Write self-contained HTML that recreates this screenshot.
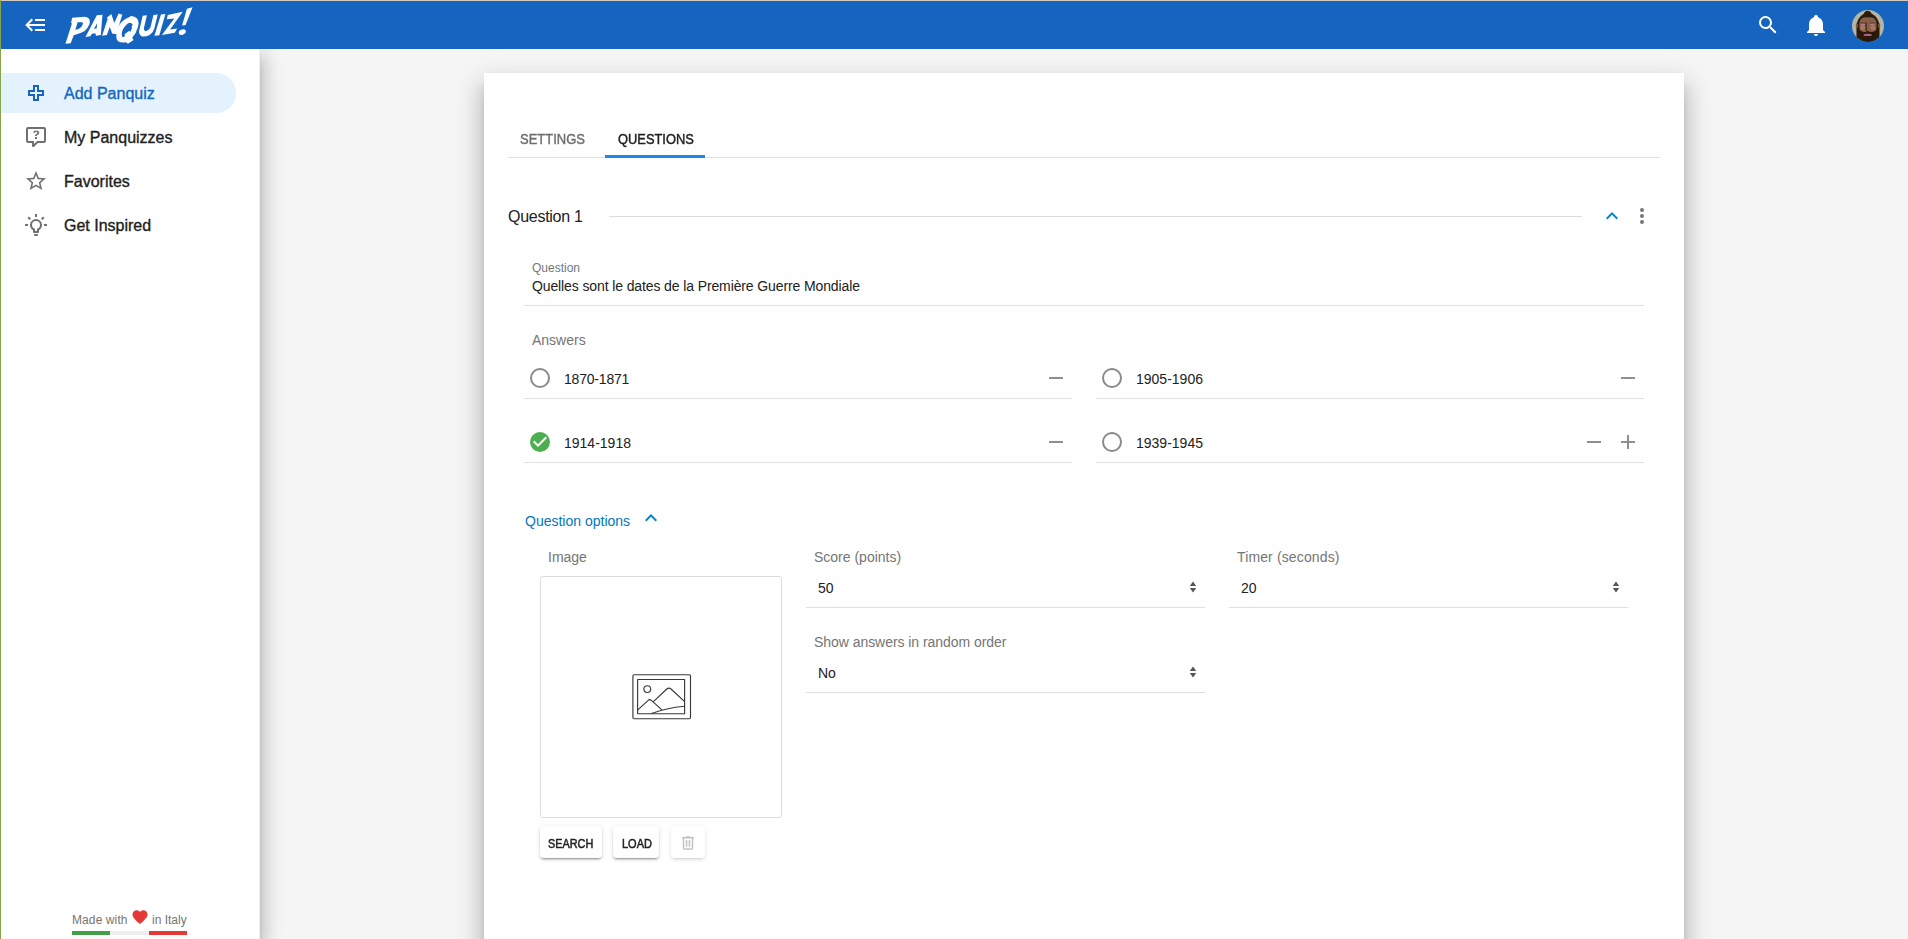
<!DOCTYPE html>
<html lang="en">
<head>
<meta charset="utf-8">
<title>Panquiz!</title>
<style>
*{box-sizing:border-box;margin:0;padding:0}
html,body{width:1908px;height:939px;overflow:hidden;background:#f5f5f5;font-family:"Liberation Sans",sans-serif;color:#212121}
body{position:relative}
.abs{position:absolute}
.t{position:absolute;white-space:nowrap;line-height:1;transform-origin:0 0}
.m{-webkit-text-stroke:0.35px currentColor}
.g{color:#757575}
.ln{position:absolute;height:1px;background:#e0e0e0}
svg{position:absolute;overflow:visible}
#topline{left:0;top:0;width:1908px;height:1px;background:#d1c9be}
#leftline{left:0;top:0;width:1px;height:939px;background:#84a648}
#header{left:1px;top:1px;width:1907px;height:48px;background:#1565c0}
#side{left:1px;top:49px;width:259px;height:890px;background:#fff;border-right:1px solid #efefef;box-shadow:0 7px 8px -4px rgba(0,0,0,.2),0 12px 17px 2px rgba(0,0,0,.15),0 5px 22px 4px rgba(0,0,0,.13)}
#active{left:1px;top:73px;width:235px;height:40px;background:#e3f2fd;border-radius:0 20px 20px 0}
#card{left:484px;top:73px;width:1200px;height:900px;background:#fff;box-shadow:0 9px 9px -4px rgba(0,0,0,.2),0 17px 21px 2px rgba(0,0,0,.14),0 10px 26px 4px rgba(0,0,0,.12)}
.radio{position:absolute;width:20px;height:20px;border:2px solid #8a8a8a;border-radius:50%}
.btn{position:absolute;height:32px;top:826px;background:#fff;border-radius:4px;box-shadow:0 3px 1px -2px rgba(0,0,0,.2),0 2px 2px 0 rgba(0,0,0,.14),0 1px 5px 0 rgba(0,0,0,.12)}
</style>
</head>
<body>
<div class="abs" id="side"></div>
<div class="abs" id="header"></div>
<div class="abs" id="topline"></div>
<div class="abs" id="leftline"></div>

<!-- header icons -->
<svg style="left:24px;top:13px" width="24" height="24" viewBox="0 0 24 24"><path fill="#fff" d="M5,13L9,17L7.6,18.42L1.18,12L7.6,5.58L9,7L5,11H21V13H5M21,6V8H11V6H21M21,16V18H11V16H21Z"/></svg>
<!-- LOGO -->
<svg id="logo" style="left:0;top:0" width="200" height="49" viewBox="0 0 200 49">
<g fill="#fff" transform="translate(62,10) scale(0.04047)">
<path fill-rule="evenodd" d="M250,190 L560,165 Q640,170 675,225 Q700,290 675,360 Q640,450 560,520 Q440,590 290,625 L215,820 L85,835 L245,335 L225,320 Z M385,300 L500,305 Q525,320 515,350 Q490,420 420,465 L330,495 Z"/>
<path fill-rule="evenodd" d="M860,130 L1000,120 L960,620 L840,635 L825,575 L740,585 L700,650 L580,665 Z M870,330 L855,460 L790,465 Z"/>
<path d="M990,635 L1130,215 L1105,190 L1220,100 L1290,320 L1400,85 L1490,120 L1340,600 L1240,580 L1180,420 L1110,615 Z"/>
</g>
<g fill="#fff" transform="translate(112,4) scale(0.04685)">
<path fill-rule="evenodd" d="M390,258 Q500,256 552,335 Q585,400 555,490 Q520,620 430,720 L460,770 L340,850 L300,815 Q200,840 130,795 Q85,750 90,680 Q100,560 160,440 Q250,310 390,270 Z M371,402 Q425,405 440,433 L417,495 L429,511 L386,603 L371,572 L272,642 L270,696 Q240,712 224,704 Q205,680 209,634 Q212,590 232,542 Q260,490 294,457 Q330,415 371,402 Z"/>
<path d="M112,490 L160,480 L125,640 L80,640 Z"/>
<path d="M655,250 L745,240 L680,520 Q680,575 715,580 Q780,570 820,500 L885,235 L975,225 L905,520 Q880,610 810,655 Q730,700 650,695 Q585,670 575,590 Z"/>
<path d="M1045,225 L1140,215 L1010,665 L905,680 Z"/>
<path d="M1190,235 L1510,165 L1240,545 L1390,525 L1340,615 L1065,660 L1330,310 L1170,325 Z"/>
<path d="M1600,100 L1720,70 L1570,450 L1495,460 Z"/>
<ellipse cx="1500" cy="600" rx="78" ry="55" transform="rotate(-25 1500 600)"/>
</g>
</svg>
<svg style="left:1756px;top:13px" width="24" height="24" viewBox="0 0 24 24"><path fill="#fff" d="M9.5,3A6.5,6.5 0 0,1 16,9.5C16,11.11 15.41,12.59 14.44,13.73L14.71,14H15.5L20.5,19L19,20.5L14,15.5V14.71L13.73,14.44C12.59,15.41 11.11,16 9.5,16A6.5,6.5 0 0,1 3,9.5A6.5,6.5 0 0,1 9.5,3M9.5,5C7,5 5,7 5,9.5C5,12 7,14 9.5,14C12,14 14,12 14,9.5C14,7 12,5 9.5,5Z"/></svg>
<svg style="left:1804px;top:13px" width="24" height="24" viewBox="0 0 24 24"><path fill="#fff" d="M21,19V20H3V19L5,17V11C5,7.9 7.03,5.17 10,4.29C10,4.19 10,4.1 10,4A2,2 0 0,1 12,2A2,2 0 0,1 14,4C14,4.1 14,4.19 14,4.29C16.97,5.17 19,7.9 19,11V17L21,19M14,21A2,2 0 0,1 12,23A2,2 0 0,1 10,21"/></svg>
<!-- AVATAR -->
<svg id="avatar" style="left:1852px;top:10px" width="32" height="32" viewBox="0 0 32 32">
<defs><clipPath id="avc"><circle cx="16" cy="16" r="16"/></clipPath><filter id="avb" x="-20%" y="-20%" width="140%" height="140%"><feGaussianBlur stdDeviation="0.75"/></filter></defs>
<g clip-path="url(#avc)">
<rect width="32" height="32" fill="#b4b5a2"/>
<g filter="url(#avb)">
<path d="M4.6,34 L4.4,17 Q4.6,12 6.5,9 Q8.6,5.4 11.6,4 Q13,0.8 15.6,0.8 Q18.4,0.8 19.8,3.8 Q23.4,5.4 25.4,9 Q27.4,12 27.6,17 L27.4,34 Z" fill="#2c1b11"/>
<ellipse cx="4.9" cy="15.8" rx="1.2" ry="2.3" fill="#7d523b"/>
<ellipse cx="27.1" cy="15.8" rx="1.2" ry="2.3" fill="#7d523b"/>
<path d="M7.2,14 Q7.6,8.4 12,7.6 Q16,6.8 20,7.6 Q24.2,8.4 24.6,14 L24.2,20.5 Q20,23 16,23 Q12,23 7.8,20.5 Z" fill="#8b5e46"/>
<ellipse cx="10.6" cy="17.8" rx="2.6" ry="2.2" fill="#a87a62"/>
<ellipse cx="21" cy="17.8" rx="2.6" ry="2.2" fill="#a87a62"/>
<path d="M8,12.6 Q11,11.6 13.4,12.8 L13.2,13.6 Q10.5,12.8 8,13.6 Z" fill="#5e3c29"/>
<path d="M17.6,12.8 Q20,11.6 23.4,12.6 L23.4,13.6 Q20.6,12.8 17.8,13.6 Z" fill="#5e3c29"/>
<ellipse cx="10.8" cy="14.6" rx="2.4" ry="0.95" fill="#a8828a"/>
<ellipse cx="20.4" cy="14.6" rx="2.4" ry="0.95" fill="#a8828a"/>
<path d="M13.4,12.4 L13.6,20.4 L15,21 L14.9,12.6 Z" fill="#4a2e1e"/>
<path d="M6.6,18.5 Q7,29 16,32 Q25,29 25.4,18.5 Q23.5,22 20.6,22.3 Q18,21.6 16,22 Q13.6,21.6 11.2,22.3 Q8.4,22 6.6,18.5 Z" fill="#2a190f"/>
<ellipse cx="15.6" cy="21.6" rx="1.2" ry="0.6" fill="#120904"/>
<ellipse cx="15.7" cy="24.9" rx="4.2" ry="1.2" fill="#a9656d"/>
</g>
</g>
</svg>

<!-- SIDEBAR -->
<div class="abs" id="active"></div>
<svg style="left:24px;top:81px" width="24" height="24" viewBox="0 0 24 24"><path fill="#1565c0" d="M4,9H9V4H15V9H20V15H15V20H9V15H4V9M11,13V18H13V13H18V11H13V6H11V11H6V13H11Z"/></svg>
<svg style="left:24px;top:125px" width="24" height="24" viewBox="0 0 24 24"><path fill="#707070" d="M4,2A2,2 0 0,0 2,4V16A2,2 0 0,0 4,18H8V21A1,1 0 0,0 9,22H9.5C9.75,22 10,21.9 10.2,21.71L13.9,18H20A2,2 0 0,0 22,16V4C22,2.89 21.1,2 20,2H4M4,4H20V16H13.08L10,19.08V16H4V4M12.19,5.5C11.3,5.5 10.59,5.68 10.05,6.04C9.5,6.4 9.22,7 9.27,7.69H11.24C11.24,7.41 11.34,7.2 11.5,7.06C11.7,6.92 11.92,6.85 12.19,6.85C12.5,6.85 12.77,6.93 12.95,7.11C13.13,7.28 13.22,7.5 13.22,7.8C13.22,8.08 13.14,8.33 13,8.54C12.83,8.76 12.62,8.94 12.36,9.08C11.84,9.4 11.5,9.68 11.29,9.92C11.1,10.16 11,10.5 11,11H13C13,10.72 13.05,10.5 13.14,10.32C13.23,10.15 13.4,10 13.66,9.85C14.12,9.64 14.5,9.36 14.79,9C15.08,8.63 15.23,8.24 15.23,7.8C15.23,7.1 14.96,6.54 14.42,6.12C13.88,5.71 13.13,5.5 12.19,5.5M11,12V14H13V12H11Z"/></svg>
<svg style="left:24px;top:169px" width="24" height="24" viewBox="0 0 24 24"><path fill="#707070" d="M12,15.39L8.24,17.66L9.23,13.38L5.91,10.5L10.29,10.13L12,6.09L13.71,10.13L18.09,10.5L14.77,13.38L15.76,17.66M22,9.24L14.81,8.63L12,2L9.19,8.63L2,9.24L7.45,13.97L5.82,21L12,17.27L18.18,21L16.54,13.97L22,9.24Z"/></svg>
<svg style="left:24px;top:213px" width="24" height="24" viewBox="0 0 24 24"><path fill="#707070" d="M20,11H23V13H20V11M1,11H4V13H1V11M13,1V4H11V1H13M4.92,3.5L7.05,5.64L5.63,7.05L3.5,4.93L4.92,3.5M16.95,5.63L19.07,3.5L20.5,4.93L18.37,7.05L16.95,5.63M12,6A6,6 0 0,1 18,12C18,14.22 16.79,16.16 15,17.2V19A1,1 0 0,1 14,20H10A1,1 0 0,1 9,19V17.2C7.21,16.16 6,14.22 6,12A6,6 0 0,1 12,6M14,21V22A1,1 0 0,1 13,23H11A1,1 0 0,1 10,22V21H14M11,18H13V15.87C14.73,15.43 16,13.86 16,12A4,4 0 0,0 12,8A4,4 0 0,0 8,12C8,13.86 9.27,15.43 11,15.87V18Z"/></svg>

<div class="t m" id="t1" style="left:64px;top:86px;font-size:16px;color:#1565c0">Add Panquiz</div>
<div class="t m" id="t2" style="left:64px;top:130px;font-size:16px">My Panquizzes</div>
<div class="t m" id="t3" style="left:64px;top:174px;font-size:16px">Favorites</div>
<div class="t m" id="t4" style="left:64px;top:218px;font-size:16px">Get Inspired</div>

<!-- footer -->
<div class="t g" id="t5" style="left:72px;top:914px;font-size:12px;letter-spacing:0.1px">Made with</div>
<svg style="left:131px;top:907.6px" width="18" height="18" viewBox="0 0 24 24"><path fill="#e53935" d="M12,21.35L10.55,20.03C5.4,15.36 2,12.27 2,8.5C2,5.41 4.42,3 7.5,3C9.24,3 10.91,3.81 12,5.08C13.09,3.81 14.76,3 16.5,3C19.58,3 22,5.41 22,8.5C22,12.27 18.6,15.36 13.45,20.03L12,21.35Z"/></svg>
<div class="t g" id="t6" style="left:152px;top:914px;font-size:12px">in Italy</div>
<div class="abs" style="left:72px;top:931px;width:38px;height:4px;background:#43a047"></div>
<div class="abs" style="left:110px;top:931px;width:39px;height:4px;background:#eeeeee"></div>
<div class="abs" style="left:149px;top:931px;width:38px;height:4px;background:#e53935"></div>

<!-- CARD -->
<div class="abs" id="card"></div>
<div class="ln" style="left:508px;top:157px;width:1152px"></div>
<div class="abs" style="left:605px;top:155px;width:100px;height:3px;background:#1e88e5"></div>
<div class="t m" id="t7" style="left:520px;top:131.7px;font-size:14.4px;color:#6f6f6f;-webkit-text-stroke:0.45px currentColor;transform:scaleX(0.902)">SETTINGS</div>
<div class="t m" id="t8" style="left:618px;top:131.7px;font-size:14.4px;-webkit-text-stroke:0.45px currentColor;transform:scaleX(0.894)">QUESTIONS</div>

<div class="t" id="t9" style="left:508px;top:209px;font-size:16px;letter-spacing:-0.27px">Question 1</div>
<div class="ln" style="left:609px;top:216px;width:973px;background:#dcdcdc"></div>
<svg style="left:1600px;top:204px" width="24" height="24" viewBox="0 0 24 24"><path fill="#0284cc" d="M7.41,15.41L12,10.83L16.59,15.41L18,14L12,8L6,14L7.41,15.41Z"/></svg>
<svg style="left:1630px;top:204px" width="24" height="24" viewBox="0 0 24 24"><path fill="#757575" d="M12,16A2,2 0 0,1 14,18A2,2 0 0,1 12,20A2,2 0 0,1 10,18A2,2 0 0,1 12,16M12,10A2,2 0 0,1 14,12A2,2 0 0,1 12,14A2,2 0 0,1 10,12A2,2 0 0,1 12,10M12,4A2,2 0 0,1 14,6A2,2 0 0,1 12,8A2,2 0 0,1 10,6A2,2 0 0,1 12,4Z"/></svg>

<div class="t g" id="t10" style="left:532px;top:262px;font-size:12px">Question</div>
<div class="t" id="t11" style="left:532px;top:279px;font-size:14px;letter-spacing:-0.115px">Quelles sont le dates de la Première Guerre Mondiale</div>
<div class="ln" style="left:524px;top:305px;width:1120px"></div>

<div class="t g" id="t12" style="left:532px;top:333px;font-size:14px">Answers</div>

<div class="radio" style="left:530px;top:368px"></div>
<div class="t" id="t13" style="left:564px;top:372px;font-size:14px;letter-spacing:-0.2px">1870-1871</div>
<div class="abs" style="left:1049px;top:377px;width:14px;height:2px;background:#8e8e8e"></div>
<div class="ln" style="left:524px;top:398px;width:548px"></div>

<div class="radio" style="left:1102px;top:368px"></div>
<div class="t" id="t14" style="left:1136px;top:372px;font-size:14px">1905-1906</div>
<div class="abs" style="left:1621px;top:377px;width:14px;height:2px;background:#8e8e8e"></div>
<div class="ln" style="left:1096px;top:398px;width:548px"></div>

<svg style="left:528px;top:430px" width="24" height="24" viewBox="0 0 24 24"><path fill="#4caf50" d="M12,2A10,10 0 0,0 2,12A10,10 0 0,0 12,22A10,10 0 0,0 22,12A10,10 0 0,0 12,2M10,17L5,12L6.41,10.59L10,14.17L17.59,6.58L19,8L10,17Z"/></svg>
<div class="t" id="t15" style="left:564px;top:436px;font-size:14px">1914-1918</div>
<div class="abs" style="left:1049px;top:441px;width:14px;height:2px;background:#8e8e8e"></div>
<div class="ln" style="left:524px;top:462px;width:548px"></div>

<div class="radio" style="left:1102px;top:432px"></div>
<div class="t" id="t16" style="left:1136px;top:436px;font-size:14px">1939-1945</div>
<div class="abs" style="left:1587px;top:441px;width:14px;height:2px;background:#8e8e8e"></div>
<div class="abs" style="left:1621px;top:441px;width:14px;height:2px;background:#8e8e8e"></div>
<div class="abs" style="left:1627px;top:435px;width:2px;height:14px;background:#8e8e8e"></div>
<div class="ln" style="left:1096px;top:462px;width:548px"></div>

<div class="t" id="t17" style="left:525px;top:514px;font-size:14px;color:#0277bd">Question options</div>
<svg style="left:639px;top:506px" width="24" height="24" viewBox="0 0 24 24"><path fill="#0284cc" d="M7.41,15.41L12,10.83L16.59,15.41L18,14L12,8L6,14L7.41,15.41Z"/></svg>

<div class="t g" id="t18" style="left:548px;top:550px;font-size:14px">Image</div>
<div class="abs" style="left:540px;top:576px;width:242px;height:242px;border:1px solid #dcdcdc;border-radius:3px;background:#fff"></div>
<svg style="left:621px;top:666px" width="80" height="60" viewBox="0 0 80 60"><g fill="none" stroke="#3a3a3a" stroke-width="1.15" stroke-linejoin="round" stroke-linecap="round">
<rect x="11.9" y="8.7" width="57.6" height="44" rx="1.2"/>
<rect x="16.6" y="13.5" width="47" height="34.2"/>
<circle cx="26.3" cy="23.1" r="3.4"/>
<path d="M16.8,43.9 L27.2,34.3 Q28.8,32.8 30.4,34.3 L40.6,43.6"/>
<path d="M32.7,35.4 L45.8,23 Q47.9,21.2 50,23 L63.4,35.4"/>
<path d="M30.5,47.5 Q45,42 63.5,40.3"/>
</g></svg>

<div class="btn" style="left:540px;width:62px"></div>
<div class="btn" style="left:613px;width:46px"></div>
<div class="btn" style="left:671px;width:34px;box-shadow:0 3px 1px -2px rgba(0,0,0,.07),0 2px 3px 0 rgba(0,0,0,.06),0 1px 6px 0 rgba(0,0,0,.08)"></div>
<div class="t m" id="t19" style="left:548px;top:838px;font-size:12px;-webkit-text-stroke:0.5px currentColor;transform:scaleX(0.905)">SEARCH</div>
<div class="t m" id="t20" style="left:621.5px;top:838px;font-size:12px;-webkit-text-stroke:0.5px currentColor;transform:scaleX(0.915)">LOAD</div>
<svg style="left:679px;top:834px" width="18" height="18" viewBox="0 0 24 24"><path fill="#c4c4c4" d="M9,3V4H4V6H5V19A2,2 0 0,0 7,21H17A2,2 0 0,0 19,19V6H20V4H15V3H9M7,6H17V19H7V6M9,8V17H11V8H9M13,8V17H15V8H13Z"/></svg>

<div class="t g" id="t21" style="left:814px;top:550px;font-size:14px">Score (points)</div>
<div class="t" id="t22" style="left:818px;top:581px;font-size:14px">50</div>
<svg style="left:1189px;top:581px" width="8" height="12" viewBox="0 0 8 12"><path fill="#555" d="M4,0.5 L7.2,5 H0.8 Z M4,11.5 L0.8,7 H7.2 Z"/></svg>
<div class="ln" style="left:806px;top:607px;width:399px"></div>

<div class="t g" id="t23" style="left:1237px;top:550px;font-size:14px;letter-spacing:0.13px">Timer (seconds)</div>
<div class="t" id="t24" style="left:1241px;top:581px;font-size:14px">20</div>
<svg style="left:1612px;top:581px" width="8" height="12" viewBox="0 0 8 12"><path fill="#555" d="M4,0.5 L7.2,5 H0.8 Z M4,11.5 L0.8,7 H7.2 Z"/></svg>
<div class="ln" style="left:1229px;top:607px;width:399px"></div>

<div class="t g" id="t25" style="left:814px;top:635px;font-size:14px;letter-spacing:-0.05px">Show answers in random order</div>
<div class="t" id="t26" style="left:818px;top:666px;font-size:14px">No</div>
<svg style="left:1189px;top:666px" width="8" height="12" viewBox="0 0 8 12"><path fill="#555" d="M4,0.5 L7.2,5 H0.8 Z M4,11.5 L0.8,7 H7.2 Z"/></svg>
<div class="ln" style="left:806px;top:692px;width:399px"></div>

</body>
</html>
